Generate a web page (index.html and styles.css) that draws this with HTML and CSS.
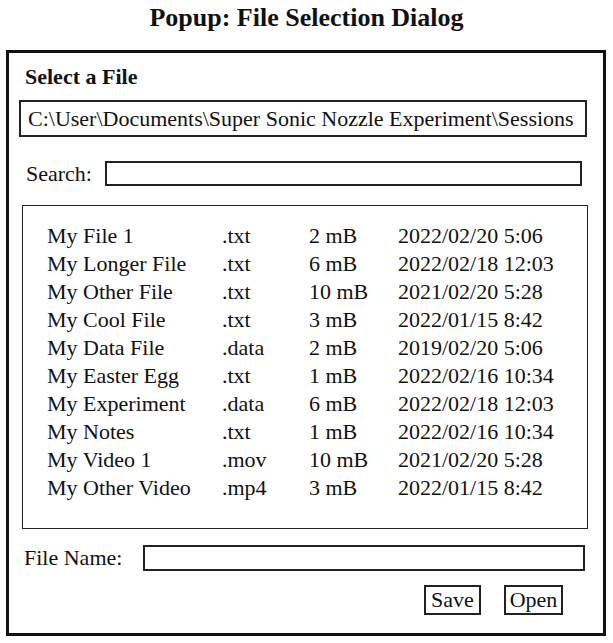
FILE: index.html
```html
<!DOCTYPE html>
<html>
<head>
<meta charset="utf-8">
<link rel="stylesheet" href="styles.css">
</head>
<body>
<div class="title">Popup: File Selection Dialog</div>
<div class="dialog">
  <div class="heading">Select a File</div>
  <div class="path">C:\User\Documents\Super Sonic Nozzle Experiment\Sessions</div>
  <div class="search-row">
    <span class="label">Search:</span>
    <div class="input search-input"></div>
  </div>
  <div class="list">
    <div class="row"><span class="c-name">My File 1</span><span class="c-ext">.txt</span><span class="c-size">2 mB</span><span class="c-date">2022/02/20 5:06</span></div>
    <div class="row"><span class="c-name">My Longer File</span><span class="c-ext">.txt</span><span class="c-size">6 mB</span><span class="c-date">2022/02/18 12:03</span></div>
    <div class="row"><span class="c-name">My Other File</span><span class="c-ext">.txt</span><span class="c-size">10 mB</span><span class="c-date">2021/02/20 5:28</span></div>
    <div class="row"><span class="c-name">My Cool File</span><span class="c-ext">.txt</span><span class="c-size">3 mB</span><span class="c-date">2022/01/15 8:42</span></div>
    <div class="row"><span class="c-name">My Data File</span><span class="c-ext">.data</span><span class="c-size">2 mB</span><span class="c-date">2019/02/20 5:06</span></div>
    <div class="row"><span class="c-name">My Easter Egg</span><span class="c-ext">.txt</span><span class="c-size">1 mB</span><span class="c-date">2022/02/16 10:34</span></div>
    <div class="row"><span class="c-name">My Experiment</span><span class="c-ext">.data</span><span class="c-size">6 mB</span><span class="c-date">2022/02/18 12:03</span></div>
    <div class="row"><span class="c-name">My Notes</span><span class="c-ext">.txt</span><span class="c-size">1 mB</span><span class="c-date">2022/02/16 10:34</span></div>
    <div class="row"><span class="c-name">My Video 1</span><span class="c-ext">.mov</span><span class="c-size">10 mB</span><span class="c-date">2021/02/20 5:28</span></div>
    <div class="row"><span class="c-name">My Other Video</span><span class="c-ext">.mp4</span><span class="c-size">3 mB</span><span class="c-date">2022/01/15 8:42</span></div>
  </div>
  <div class="name-row">
    <span class="label">File Name:</span>
    <div class="input name-input"></div>
  </div>
  <div class="buttons">
    <div class="btn save">Save</div>
    <div class="btn open">Open</div>
  </div>
</div>
</body>
</html>
```

FILE: styles.css
```css
html, body {
  margin: 0;
  padding: 0;
  background: #fff;
}
body {
  font-family: "Liberation Serif", "Times New Roman", serif;
  color: #111;
  width: 613px;
  height: 643px;
  overflow: hidden;
}
.title {
  height: 50px;
  box-sizing: border-box;
  padding-top: 3px;
  text-align: center;
  font-weight: bold;
  font-size: 26px;
  line-height: 30px;
}
.dialog {
  margin-left: 6px;
  width: 600px;
  height: 586px;
  box-sizing: border-box;
  border: 3px solid #111;
  display: flex;
  flex-direction: column;
}
.heading {
  margin: 11px 0 0 16px;
  font-weight: bold;
  font-size: 22px;
  line-height: 26px;
}
.path {
  margin: 10px 0 0 10px;
  width: 568px;
  height: 37px;
  box-sizing: border-box;
  border: 2px solid #222;
  padding-left: 7px;
  font-size: 22px;
  line-height: 33px;
  white-space: nowrap;
}
.search-row {
  margin: 24px 0 0 17px;
  height: 25px;
  display: flex;
  align-items: center;
}
.label {
  font-size: 22px;
  line-height: 24px;
}
.input {
  height: 25px;
  box-sizing: border-box;
  border: 2px solid #222;
}
.search-input {
  margin-left: 13px;
  width: 477px;
}
.list {
  margin: 19px 0 0 13px;
  width: 566px;
  height: 324px;
  box-sizing: border-box;
  border: 1.5px solid #222;
  padding: 16px 0 0 24px;
}
.row {
  display: flex;
  font-size: 22px;
  line-height: 28px;
  white-space: nowrap;
}
.c-name { width: 175px; }
.c-ext { width: 87px; }
.c-size { width: 89px; }
.name-row {
  margin: 16px 0 0 15px;
  height: 26px;
  display: flex;
  align-items: center;
}
.name-input {
  height: 26px;
  margin-left: 21px;
  width: 442px;
}
.buttons {
  margin: 14px 0 0 0;
  padding-left: 415px;
  display: flex;
  gap: 23px;
}
.btn {
  height: 30px;
  box-sizing: border-box;
  border: 2px solid #222;
  font-size: 22px;
  line-height: 26px;
  text-align: center;
}
.save { width: 57px; }
.open { width: 59px; }
```
